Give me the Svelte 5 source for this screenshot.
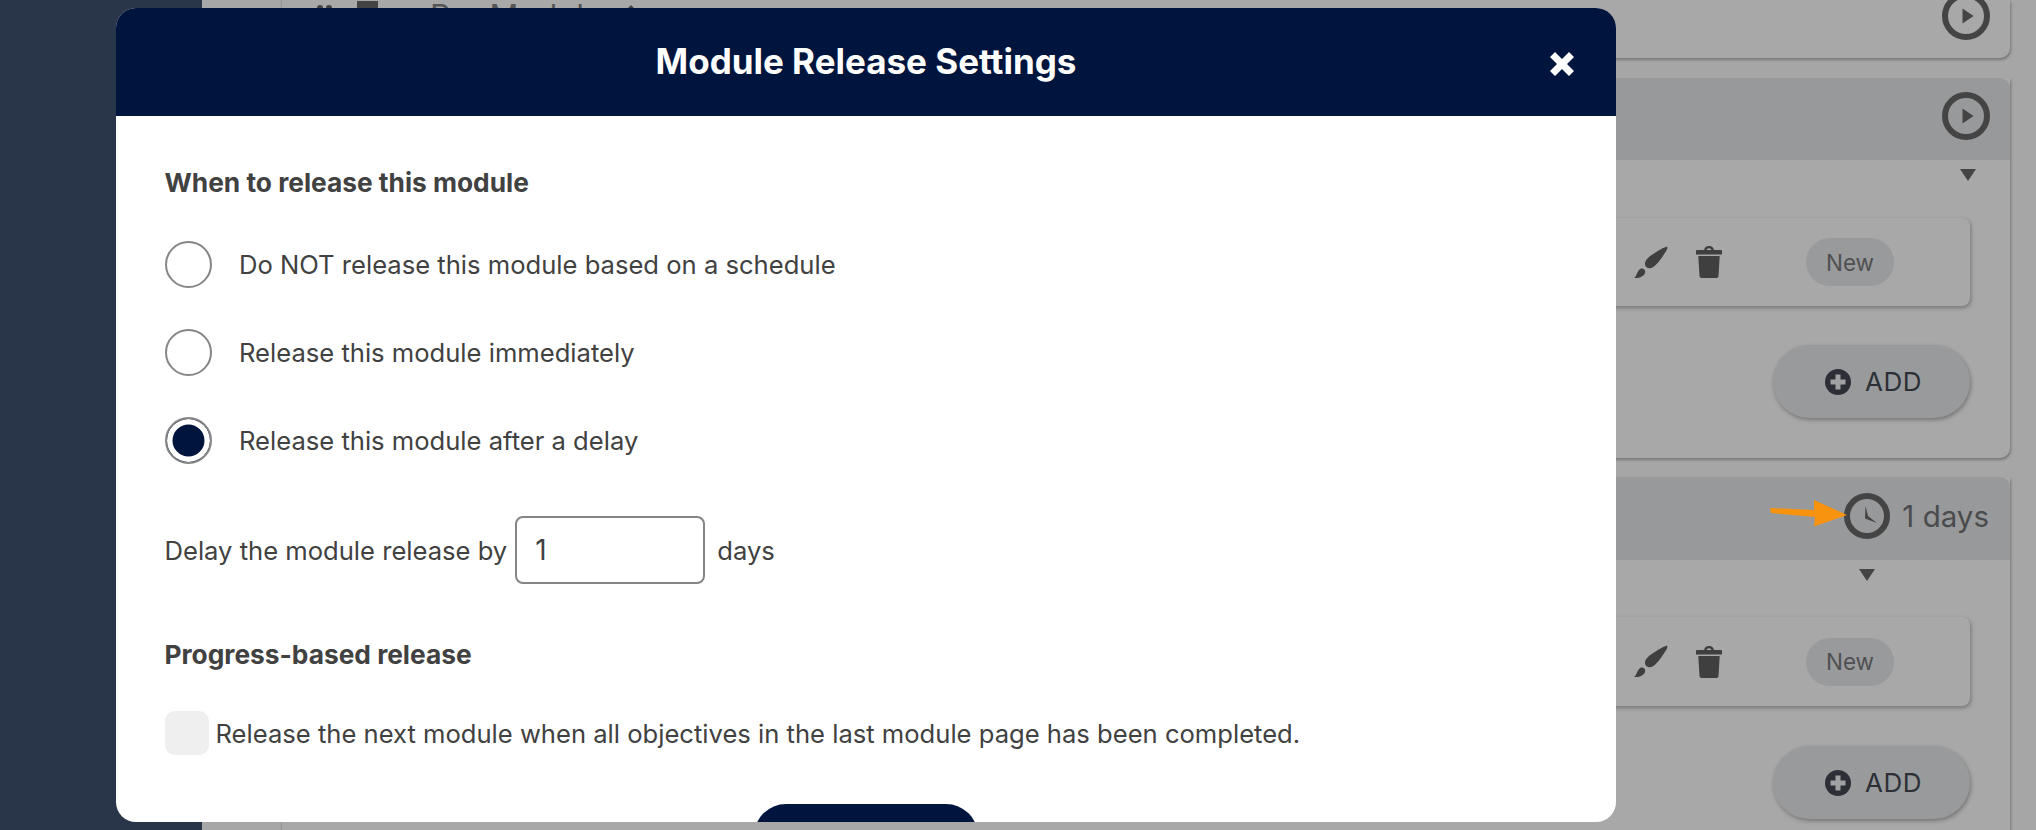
<script>
  const radios = [
    { label: 'Do NOT release this module based on a schedule', on: false },
    { label: 'Release this module immediately', on: false },
    { label: 'Release this module after a delay', on: true }
  ];
</script>

{#snippet brush()}
  <svg class="ico-brush" viewBox="0 0 34 33" aria-hidden="true"><path d="M33 .5C34 2 33 4 31.500 6 27 13 23 19 18.500 21.500 15 23.500 11 21.500 11 18c0-3.500 3-6.500 6-8.500C22 6 27 2.500 33 .5zM7 22.500c3-.5 5 2 4 4.500-1 3-5 5.500-11 5 3-1.500 2.500-7 7-9.500z"/></svg>
{/snippet}

{#snippet trash()}
  <svg class="ico-trash" viewBox="0 0 26 32" aria-hidden="true"><path d="M1 4h24a1 1 0 0 1 1 1v3.500H0V5a1 1 0 0 1 1-1zM8 4.500C8 2 10 0 13 0s5 2 5 4.500h-2.500C15.500 3.200 14.500 2.200 13 2.200s-2.500 1-2.500 2.300zM2.300 10h21.400l-1.200 20c-.1 1.200-1 2-2 2H5.500c-1 0-1.900-.8-2-2z"/></svg>
{/snippet}

{#snippet addBtn()}
  <div class="add-row">
    <div class="add">
      <svg viewBox="0 0 26 26" aria-hidden="true"><circle cx="13" cy="13" r="13" fill="#2c2f36"/><path d="M10.500 5.500h5v5h5v5h-5v5h-5v-5h-5v-5h5z" fill="#a0a1a2"/></svg>
      <span>ADD</span>
    </div>
  </div>
{/snippet}

{#snippet lesson()}
  <div class="lesson">
    {@render brush()}
    {@render trash()}
    <span class="pill">New</span>
  </div>
{/snippet}

{#snippet play()}
  <svg class="round" viewBox="0 0 48 48" aria-hidden="true"><circle cx="24" cy="24" r="21" fill="none" stroke="#444" stroke-width="6"/><path d="M20.500 16.500 31.500 24 20.500 31.500z" fill="#444"/></svg>
{/snippet}

<div class="page">
  <aside class="side"></aside>
  <div class="rail"></div>
  <main class="main">
    <section class="card first">
      <div class="first-head">
        <span class="dots"><i></i><i></i></span>
        <span class="peek-doc"></span>
        <span class="peek-text">Pre Module</span>
        <span class="peek-up"></span>
        <span class="push"></span>
        {@render play()}
      </div>
    </section>

    <section class="card second">
      <header class="head">{@render play()}</header>
      <div class="tri-row tri-a"><i class="tri"></i></div>
      {@render lesson()}
      {@render addBtn()}
    </section>

    <section class="card third">
      <header class="head">
        <svg class="round clock" viewBox="0 0 46 46" aria-hidden="true"><circle cx="23" cy="23" r="20" fill="none" stroke="#444" stroke-width="6"/><path d="M21.500 13 24 23 33 30 21 25.500z" fill="#444"/></svg>
        <span class="days">1 days</span>
      </header>
      <div class="tri-row tri-b"><i class="tri"></i></div>
      {@render lesson()}
      {@render addBtn()}
    </section>
  </main>
</div>

<svg class="arrow" viewBox="0 0 78 28" aria-hidden="true"><path d="M0 9 44 11 44 1 77 16 44 27.500 45 18 1 14z" fill="#f7930e"/></svg>

<div class="modal">
  <header class="m-head">
    <h1>Module Release Settings</h1>
    <svg class="close" viewBox="0 0 24 24" aria-hidden="true"><path d="M5 0 12 7 19 0 24 5 17 12 24 19 19 24 12 17 5 24 0 19 7 12 0 5z" fill="#fff"/></svg>
  </header>
  <div class="m-body">
    <h2 class="h-when">When to release this module</h2>
    <div class="radios">
      {#each radios as r}
        <div class="radio-row">
          <span class="radio" class:on={r.on}></span>
          <span>{r.label}</span>
        </div>
      {/each}
    </div>
    <div class="delay">
      <span>Delay the module release by</span>
      <span class="input">1</span>
      <span class="unit">days</span>
    </div>
    <h2 class="h-prog">Progress-based release</h2>
    <div class="check-row">
      <span class="check"></span>
      <span>Release the next module when all objectives in the last module page has been completed.</span>
    </div>
    <div class="save-row"><div class="save"></div></div>
  </div>
</div>

<style>
  :global(body) { margin: 0; background: #a6a6a6; overflow: hidden; }
  .page { display: flex; width: 2036px; height: 830px; overflow: hidden; background: #a6a6a6; font-family: Inter, "Liberation Sans", sans-serif; }
  .side { width: 202px; flex: none; background: #293548; }
  .rail { width: 80px; flex: none; background: #a7a7a7; border-right: 1px solid #9a9a9a; box-sizing: border-box; }
  .main { width: 1728px; flex: none; display: flex; flex-direction: column; gap: 20px; }
  .card { background: #a8a8a8; border-radius: 0 0 10px 10px; box-shadow: 1px 2px 3px rgba(0,0,0,.28); flex: none; }
  .first { height: 58px; }
  .first-head { display: flex; align-items: center; height: 48px; margin-top: -8px; padding-right: 20px; color: #444; }
  .dots { display: flex; gap: 3px; margin: 13px 0 0 35px; align-self: flex-start; }
  .dots i { width: 6px; height: 6px; border-radius: 50%; background: #444; display: block; }
  .peek-doc { width: 21px; height: 24px; background: #444; margin: 9px 0 0 25px; align-self: flex-start; }
  .peek-text { margin-left: 52px; font-size: 32px; color: #555; white-space: nowrap; }
  .peek-up { width: 0; height: 0; border: 9px solid transparent; border-top: 0; border-bottom-color: #444; align-self: flex-start; margin: 13px 0 0 19px; }
  .push { flex: 1; }
  .head { height: 82px; box-sizing: border-box; padding: 0 20px 6px 0; background: #98999a; border-radius: 10px 10px 0 0; display: flex; align-items: center; justify-content: flex-end; }
  .second { height: 380px; }
  .third { height: 500px; margin-top: -1px; }
  .third .head { height: 83px; padding-right: 21px; }
  .round { width: 48px; height: 48px; display: block; flex: none; }
  .clock { width: 46px; height: 46px; margin-right: 12px; }
  .days { font-size: 29.500px; color: #4a4b4c; line-height: 1; margin-top: 3px; }
  .tri-row { display: flex; justify-content: flex-end; height: 58px; padding-top: 9px; box-sizing: border-box; }
  .tri { width: 0; height: 0; border-style: solid; border-width: 12px 8px 0; border-color: #444 transparent transparent; display: block; }
  .tri-a { padding-right: 34px; }
  .tri-b { padding-right: 135px; height: 57px; }
  .lesson { height: 88px; margin-right: 40px; background: #a8a8a8; border-radius: 8px; box-shadow: 1px 2px 4px rgba(0,0,0,.3); display: flex; align-items: center; justify-content: flex-end; padding-right: 76px; }
  .third .lesson { height: 89px; }
  .ico-brush { width: 34px; height: 33px; fill: #3f3f3f; margin-right: 28px; }
  .ico-trash { width: 26px; height: 32px; fill: #3f3f3f; margin-right: 84px; }
  .pill { width: 88px; height: 48px; border-radius: 24px; background: #999a9b; color: #4f5051; font-size: 22.5px; display: flex; align-items: center; justify-content: center; }
  .add-row { display: flex; justify-content: flex-end; margin-right: 40px; padding-top: 39px; }
  .third .add-row { padding-top: 40px; }
  .add { width: 197px; height: 73px; box-sizing: border-box; padding-left: 4px; border-radius: 37px; background: #999a9b; box-shadow: 1px 2px 4px rgba(0,0,0,.3); display: flex; align-items: center; justify-content: center; gap: 14px; color: #2c2f36; font-size: 26px; letter-spacing: .5px; }
  .add svg { width: 26px; height: 26px; }

  .arrow { position: absolute; left: 1770px; top: 499px; width: 78px; height: 28px; }

  .modal { position: absolute; left: 116px; top: 8px; width: 1500px; height: 814px; background: #fff; border-radius: 20px; overflow: hidden; font-family: Inter, "Liberation Sans", sans-serif; color: #414141; font-size: 25.6px; }
  .m-head { height: 108px; box-sizing: border-box; padding-bottom: 2px; background: #00153d; color: #fff; display: flex; align-items: center; justify-content: center; position: relative; }
  h1 { margin: 0; font-size: 35px; font-weight: 700; }
  .close { position: absolute; right: 42px; top: 44px; width: 24px; height: 24px; }
  .m-body { padding: 51px 48px 0 48.5px; }
  h2 { margin: 0; font-size: 26.3px; font-weight: 700; line-height: 32px; }
  .radios { display: flex; flex-direction: column; gap: 41px; margin-top: 42px; }
  .radio-row { display: flex; align-items: center; gap: 27.5px; height: 47px; }
  .radio { width: 47px; height: 47px; box-sizing: border-box; border: 2px solid #858585; border-radius: 50%; background: #fff; flex: none; }
  .radio.on { background: #00153d; box-shadow: inset 0 0 0 5.5px #fff; }
  .delay { display: flex; align-items: center; gap: 8px; margin-top: 52px; height: 68px; }
  .input { width: 190px; height: 68px; box-sizing: border-box; border: 2px solid #858585; border-radius: 8px; padding-left: 18px; display: flex; align-items: center; font-size: 28px; }
  .unit { margin-left: 4px; }
  .h-prog { margin-top: 55px; }
  .check-row { display: flex; align-items: center; gap: 7px; margin-top: 40px; height: 44px; }
  .check { width: 44px; height: 44px; background: #efefef; border-radius: 10px; flex: none; }
  .save-row { display: flex; justify-content: center; margin-top: 49px; }
  .save { width: 224px; height: 64px; background: #00153d; border-radius: 32px; }
</style>
